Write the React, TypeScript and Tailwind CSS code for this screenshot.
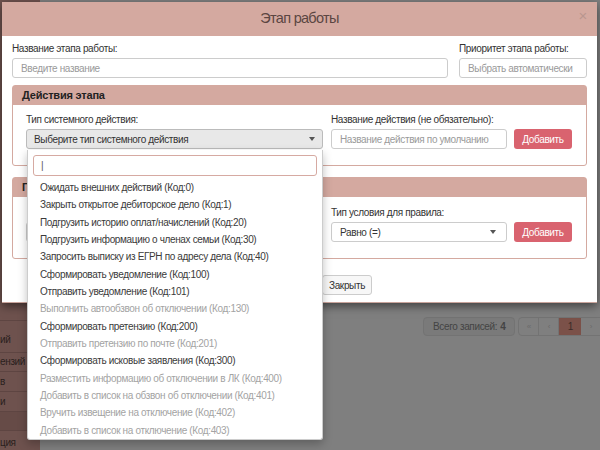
import React from "react";

const items: { t: string; d?: boolean }[] = [
  { t: "Ожидать внешних действий (Код:0)" },
  { t: "Закрыть открытое дебиторское дело (Код:1)" },
  { t: "Подгрузить историю оплат/начислений (Код:20)" },
  { t: "Подгрузить информацию о членах семьи (Код:30)" },
  { t: "Запросить выписку из ЕГРН по адресу дела (Код:40)" },
  { t: "Сформировать уведомление (Код:100)" },
  { t: "Отправить уведомление (Код:101)" },
  { t: "Выполнить автообзвон об отключении (Код:130)", d: true },
  { t: "Сформировать претензию (Код:200)" },
  { t: "Отправить претензию по почте (Код:201)", d: true },
  { t: "Сформировать исковые заявления (Код:300)" },
  { t: "Разместить информацию об отключении в ЛК (Код:400)", d: true },
  { t: "Добавить в список на обзвон об отключении (Код:401)", d: true },
  { t: "Вручить извещение на отключение (Код:402)", d: true },
  { t: "Добавить в список на отключение (Код:403)", d: true },
];

const Caret = () => (
  <span className="w-0 h-0 border-l-[3px] border-r-[3px] border-t-[4px] border-l-transparent border-r-transparent border-t-[#555]" />
);

export default function App() {
  return (
    <div
      className="relative w-[600px] h-[450px] overflow-hidden bg-[#7f7f7f] text-[10px] tracking-[-0.35px] text-[#333]"
      style={{ fontFamily: '"Liberation Sans", Arial, sans-serif' }}
    >
      {/* dimmed page behind */}
      <div className="flex h-full">
        <div className="w-10 shrink-0 h-full bg-[#6e524e] flex flex-col pt-[320px] text-[#2a1f1d]">
          <div className="h-[33px] border-t border-[#5e4542] flex items-end pb-[5px]">ий</div>
          <div className="h-[20px] border-t border-[#5e4542] flex items-center">ензий</div>
          <div className="h-[21px] border-t border-[#5e4542] flex items-center">в</div>
          <div className="h-[21px] border-t border-[#5e4542] flex items-center">и</div>
          <div className="h-[20px] border-t border-[#5e4542] bg-[#664b47]" />
          <div className="h-[20px] border-t border-[#5e4542] flex items-center pt-[4px]">ция</div>
        </div>
        <div className="flex-1 flex flex-col">
          <div className="h-[317px] shrink-0" />
          <div className="flex pl-[383px] text-[#444]">
            <div className="shrink-0 h-[19px] px-[9px] flex items-center border border-[#737373] rounded-sm bg-[#7a7a7a] mr-[3px] whitespace-nowrap">
              Всего записей:<b className="ml-[3px]">4</b>
            </div>
            <div className="shrink-0 flex h-[19px] border border-[#737373] rounded-l-sm">
              <div className="w-[20px] flex items-center justify-center border-r border-[#737373] text-[8px] text-[#6a6a6a]">«</div>
              <div className="w-[20px] flex items-center justify-center border-r border-[#737373] text-[8px] text-[#6a6a6a]">‹</div>
              <div className="w-[22px] flex items-center justify-center bg-[#7b5149] text-[#3a2a27]">1</div>
              <div className="w-[20px] flex items-center justify-center border-r border-[#737373] text-[8px] text-[#6a6a6a]">›</div>
              <div className="w-[20px] flex items-center justify-center text-[8px] text-[#6a6a6a]">»</div>
            </div>
          </div>
        </div>
      </div>

      {/* modal */}
      <div className="absolute left-[2px] top-[2px] w-[595px] h-[301px] bg-white border-b border-[#c9a49c] shadow-[0_3px_9px_rgba(0,0,0,0.5)] flex flex-col">
        <div className="h-[34px] shrink-0 bg-[#d4a9a0] flex items-center justify-center relative">
          <span className="text-[14.5px] tracking-[-0.7px] text-[#5b4642]">Этап работы</span>
          <span className="absolute right-[10px] top-[6px] text-[15px] text-[#b9968f] leading-none">×</span>
        </div>
        <div className="px-[10px] pt-[6px] flex flex-col">
          <div className="flex gap-[11px]">
            <div className="flex flex-col w-[436px]">
              <label className="h-[14px] leading-[14px] mb-[2px]">Название этапа работы:</label>
              <div className="h-[20px] border border-[#ccc] rounded-[3px] flex items-center px-[8px] text-[#9a9a9a]">Введите название</div>
            </div>
            <div className="flex flex-col w-[128px]">
              <label className="h-[14px] leading-[14px] mb-[2px] whitespace-nowrap">Приоритет этапа работы:</label>
              <div className="h-[20px] border border-[#ccc] rounded-[3px] flex items-center px-[8px] text-[#9a9a9a] whitespace-nowrap overflow-hidden">Выбрать автоматически</div>
            </div>
          </div>

          <div className="mt-[7px] w-[575px] border border-[#d4a9a0] rounded-[3px]">
            <div className="h-[19px] bg-[#d4a9a0] px-[9px] flex items-center font-bold text-[11px] tracking-[-0.2px] text-[#222]">Действия этапа</div>
            <div className="px-[13px] pt-[8px] pb-[16px] flex items-end">
              <div className="flex flex-col w-[297px]">
                <label className="h-[14px] leading-[14px] mb-[2px]">Тип системного действия:</label>
                <div className="h-[20px] border border-[#bbb] rounded-[3px] bg-[#e8e8e8] flex items-center justify-between pl-[7px] pr-[7px]">
                  <span>Выберите тип системного действия</span>
                  <Caret />
                </div>
              </div>
              <div className="flex flex-col w-[176px] ml-[8px]">
                <label className="h-[14px] leading-[14px] mb-[2px] whitespace-nowrap">Название действия (не обязательно):</label>
                <div className="h-[20px] border border-[#ccc] rounded-[3px] flex items-center px-[8px] text-[#9a9a9a] whitespace-nowrap overflow-hidden">Название действия по умолчанию</div>
              </div>
              <div className="ml-[7px] w-[58px] h-[20px] rounded-[3px] bg-[#d9636f] text-white flex items-center justify-center">Добавить</div>
            </div>
          </div>

          <div className="mt-[11px] w-[575px] border border-[#d4a9a0] rounded-[3px]">
            <div className="h-[19px] bg-[#d4a9a0] px-[9px] flex items-center font-bold text-[11px] tracking-[-0.2px] text-[#222]">Правила перехода</div>
            <div className="px-[13px] pt-[9px] pb-[16px] flex items-end">
              <div className="flex flex-col w-[297px]">
                <div className="h-[14px] mb-[2px]" />
                <div className="h-[20px] border border-[#ccc] rounded-[3px] bg-[#eee]" />
              </div>
              <div className="flex flex-col w-[176px] ml-[8px]">
                <label className="h-[14px] leading-[14px] mb-[2px]">Тип условия для правила:</label>
                <div className="h-[20px] border border-[#ccc] rounded-[3px] flex items-center justify-between pl-[8px] pr-[10px]">
                  <span>Равно (=)</span>
                  <Caret />
                </div>
              </div>
              <div className="ml-[7px] w-[58px] h-[20px] rounded-[3px] bg-[#d9636f] text-white flex items-center justify-center">Добавить</div>
            </div>
          </div>

          <div className="mt-[16px] flex justify-center gap-[5px]">
            <div className="w-[90px] h-[20px] border border-[#ccc] rounded-[3px] bg-[#d9636f]" />
            <div className="w-[50px] h-[20px] border border-[#ccc] rounded-[3px] bg-[#f7f7f7] flex items-center justify-center">Закрыть</div>
          </div>
        </div>
      </div>

      {/* open select dropdown */}
      <div className="absolute left-[27px] top-[150px] w-[296px] h-[290px] bg-white border border-[#ccc] border-t-0 rounded-b-[3px] shadow-[0_4px_10px_rgba(0,0,0,0.25)] flex flex-col">
        <div className="px-[5px] pt-[5px]">
          <div className="h-[21px] border border-[#d6aaa2] rounded-[3px] flex items-center pl-[7px] text-[#555]">|</div>
        </div>
        <div className="pt-[3px] flex flex-col">
          {items.map((it) => (
            <div
              key={it.t}
              className={
                "h-[17.35px] leading-[17.35px] pl-[12px] whitespace-nowrap " +
                (it.d ? "text-[#a3a3a3]" : "text-[#3a3a3a]")
              }
            >
              {it.t}
            </div>
          ))}
        </div>
      </div>
    </div>
  );
}
